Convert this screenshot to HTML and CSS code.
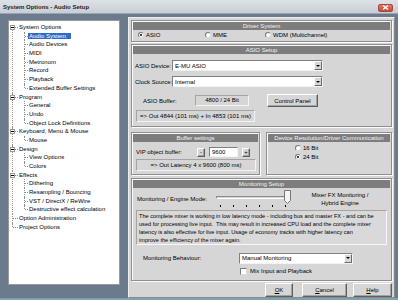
FILE: index.html
```html
<!DOCTYPE html>
<html lang="en">

<head>
    <meta charset="utf-8">
    <title>System Options - Audio Setup</title>
    <link rel="stylesheet" href="styles.css">
</head>

<body>
    <div class="window">
        <div class="titlebar">
            <span class="title">System Options - Audio Setup</span>
            <span class="close">
                <svg width="7" height="5" viewBox="0 0 7 5"><path d="M1 0.5L6 4.5M6 0.5L1 4.5" stroke="#fff" stroke-width="1.3"/></svg>
            </span>
        </div>
        <div class="main">
            <div class="tree">
                <ul>
                    <li class="node"><span class="exp"></span><div class="row">System Options</div>
                        <ul>
                            <li class="leaf"><div class="row"><span class="sel">Audio System</span></div></li>
                            <li class="leaf"><div class="row">Audio Devices</div></li>
                            <li class="leaf"><div class="row">MIDI</div></li>
                            <li class="leaf"><div class="row">Metronom</div></li>
                            <li class="leaf"><div class="row">Record</div></li>
                            <li class="leaf"><div class="row">Playback</div></li>
                            <li class="leaf"><div class="row">Extended Buffer Settings</div></li>
                        </ul>
                    </li>
                    <li class="node"><span class="exp"></span><div class="row">Program</div>
                        <ul>
                            <li class="leaf"><div class="row">General</div></li>
                            <li class="leaf"><div class="row">Undo</div></li>
                            <li class="leaf"><div class="row">Object Lock Definitions</div></li>
                        </ul>
                    </li>
                    <li class="node"><span class="exp"></span><div class="row">Keyboard, Menu &amp; Mouse</div>
                        <ul>
                            <li class="leaf"><div class="row">Mouse</div></li>
                        </ul>
                    </li>
                    <li class="node"><span class="exp"></span><div class="row">Design</div>
                        <ul>
                            <li class="leaf"><div class="row">View Options</div></li>
                            <li class="leaf"><div class="row">Colors</div></li>
                        </ul>
                    </li>
                    <li class="node"><span class="exp"></span><div class="row">Effects</div>
                        <ul>
                            <li class="leaf"><div class="row">Dithering</div></li>
                            <li class="leaf"><div class="row">Resampling / Bouncing</div></li>
                            <li class="leaf"><div class="row">VST / DirectX / ReWire</div></li>
                            <li class="leaf"><div class="row">Destructive effect calculation</div></li>
                        </ul>
                    </li>
                    <li class="node"><div class="row">Option Administration</div></li>
                    <li class="node"><div class="row">Project Options</div></li>
                </ul>
            </div>

            <div class="panel">
                <div class="group driver">
                    <div class="group-head">Driver System</div>
                    <div class="radios">
                        <label class="radio w-asio"><span class="dot on"></span>ASIO</label>
                        <label class="radio w-mme"><span class="dot"></span>MME</label>
                        <label class="radio"><span class="dot"></span>WDM (Multichannel)</label>
                    </div>
                </div>

                <div class="group asio">
                    <div class="group-head">ASIO Setup</div>
                    <div class="field first">
                        <span class="field-label">ASIO Device:</span>
                        <div class="select device-select"><span>E-MU ASIO</span><i class="arrow"></i></div>
                    </div>
                    <div class="field">
                        <span class="field-label">Clock Source:</span>
                        <div class="select device-select"><span>Internal</span><i class="arrow"></i></div>
                    </div>
                    <div class="buffer-row">
                        <span class="buffer-label">ASIO Buffer:</span>
                        <span class="readout">4800 / 24 Bit</span>
                        <button class="btn cp">Control Panel</button>
                    </div>
                    <div class="info out">=&gt; Out 4844 (101 ms) + In 4853 (101 ms)</div>
                </div>

                <div class="split">
                    <div class="group buffers">
                        <div class="group-head">Buffer settings</div>
                        <div class="spin-row">
                            <span class="spin-label">VIP object buffer:</span>
                            <button class="btn tiny">-</button>
                            <span class="num">9600</span>
                            <button class="btn tiny">+</button>
                        </div>
                        <div class="info latency">=&gt; Out Latency 4 x 9600 (800 ms)</div>
                    </div>
                    <div class="group device">
                        <div class="group-head">Device Resolution/Driver Communication</div>
                        <div class="bits">
                            <label class="radio"><span class="dot"></span>16 Bit</label>
                            <label class="radio"><span class="dot on"></span>24 Bit</label>
                        </div>
                    </div>
                </div>

                <div class="group monitoring">
                    <div class="group-head">Monitoring Setup</div>
                    <div class="engine-row">
                        <span class="engine-label">Monitoring / Engine Mode:</span>
                        <div class="slider">
                            <div class="track"></div>
                            <svg class="thumb" width="7" height="14" viewBox="0 0 7 14"><path d="M0.5 0.5H6.5V10.5L3.5 13.5L0.5 10.5Z" fill="#f4f4f4" stroke="#777"/></svg>
                            <div class="ticks"><i></i><i></i><i></i><i></i><i></i><i></i></div>
                        </div>
                        <span class="engine-value">Mixer FX Monitoring /<br>Hybrid Engine</span>
                    </div>
                    <div class="desc">
                        The complete mixer is working in low latency mode - including bus and master FX - and can be<br>
                        used for processing live input.&nbsp; This may result in increased CPU load and the complete mixer<br>
                        latency is also effective for live input. Usage of economy tracks with higher latency can<br>
                        improve the efficiency of the mixer again.
                    </div>
                    <div class="behaviour-row">
                        <span class="behaviour-label">Monitoring Behaviour:</span>
                        <div class="select behaviour"><span>Manual Monitoring</span><i class="arrow"></i></div>
                    </div>
                    <label class="check-row"><span class="box"></span>Mix Input and Playback</label>
                </div>

                <div class="actions">
                    <button class="btn ok"><u>O</u>K</button>
                    <button class="btn cancel"><u>C</u>ancel</button>
                    <button class="btn help"><u>H</u>elp</button>
                </div>
            </div>
        </div>
    </div>
</body>

</html>
```

FILE: styles.css
```css
* {
    box-sizing: border-box;
}

body {
    margin: 0;
    background-color: #6b7a8d;
    font-family: "Liberation Sans", Arial, sans-serif;
    font-size: 6px;
    color: #000;
}

.window {
    width: 398px;
    height: 300px;
    display: flex;
    flex-direction: column;
    background-color: #6b7a8d;
    border-bottom: 2px solid #7ea3b0;
    overflow: hidden;
}

.titlebar {
    height: 14px;
    flex: none;
    display: flex;
    align-items: center;
    justify-content: space-between;
    padding: 1px 5px 0 3px;
    background: linear-gradient(#dde2e7, #c7ced6);
    border-bottom: 1px solid #9aa5b2;
}

.title {
    font-weight: bold;
    color: #1c1c1c;
}

.close {
    width: 15px;
    height: 8px;
    display: flex;
    align-items: center;
    justify-content: center;
    background: linear-gradient(#e07a68, #c44a3a);
    border: 1px solid #a8483c;
    border-radius: 2px;
    margin-top: 1px;
}

.main {
    flex: 1;
    display: flex;
    align-items: flex-start;
    padding-left: 8px;
    gap: 8px;
}

/* tree view */
.tree {
    width: 112px;
    height: 265px;
    margin-top: 6px;
    padding-top: 2px;
    background: #fff;
    border: 1px solid #9a9a9a;
    overflow: hidden;
}

.tree ul {
    list-style: none;
    margin: 0;
    padding: 0;
}

.tree li {
    position: relative;
}

.row {
    height: 8.7px;
    line-height: 8.7px;
    white-space: nowrap;
}

.node {
    padding-left: 10px;
}

.node::before {
    content: "";
    position: absolute;
    left: 3px;
    top: 0;
    bottom: 0;
    border-left: 1px dotted #8c8c8c;
}

.node:first-child::before {
    top: 4px;
}

.node:last-child::before {
    bottom: auto;
    height: 4px;
}

.node::after {
    content: "";
    position: absolute;
    left: 4px;
    top: 4px;
    width: 5px;
    border-top: 1px dotted #8c8c8c;
}

.exp {
    position: absolute;
    left: 1px;
    top: 2px;
    width: 5px;
    height: 5px;
    border: 1px solid #9a9a9a;
    background: linear-gradient(#fff 1px, #000 1px, #000 2px, #fff 2px);
    background-size: 3px 3px;
    background-position: 0 0;
    background-repeat: no-repeat;
    z-index: 1;
}

.leaf {
    padding-left: 10px;
}

.leaf::before {
    content: "";
    position: absolute;
    left: 5px;
    top: 0;
    bottom: 0;
    border-left: 1px dotted #8c8c8c;
}

.leaf:last-child::before {
    bottom: auto;
    height: 4px;
}

.leaf::after {
    content: "";
    position: absolute;
    left: 6px;
    top: 4px;
    width: 3px;
    border-top: 1px dotted #8c8c8c;
}

.sel {
    background: #316ac5;
    color: #fff;
    padding: 0 5px 0 1px;
    margin-left: -1px;
}

/* right panel */
.panel {
    width: 267px;
    height: 281px;
    margin-top: 3px;
    padding: 2px 2px 0 2px;
    background: #d6d6d6;
    border: 1px solid;
    border-color: #eeeeee #8a8a8a #8a8a8a #eeeeee;
    display: flex;
    flex-direction: column;
}

.group {
    border: 1px solid #8e8e8e;
    box-shadow: inset 1px 1px 0 #fbfbfb, 1px 1px 0 #fbfbfb;
    padding: 1px;
}

.group-head {
    height: 8px;
    line-height: 8px;
    background: #7d7d7d;
    color: #f2f2f2;
    text-align: center;
    white-space: nowrap;
}

.driver {
    height: 22px;
}

.radios {
    display: flex;
    align-items: center;
    height: 10px;
    padding-left: 5px;
}

.radio {
    display: flex;
    align-items: center;
    gap: 2px;
    white-space: nowrap;
}

.w-asio {
    width: 67px;
}

.w-mme {
    width: 60px;
}

.dot {
    width: 6px;
    height: 6px;
    border-radius: 50%;
    background: #fff;
    border: 1px solid;
    border-color: #7a7a7a #dcdcdc #dcdcdc #7a7a7a;
    display: flex;
    align-items: center;
    justify-content: center;
}

.dot.on::after {
    content: "";
    width: 2px;
    height: 2px;
    border-radius: 50%;
    background: #000;
}

.asio {
    height: 83px;
    margin-top: 2px;
}

.field {
    display: flex;
    align-items: center;
    height: 11px;
    margin-top: 5px;
    padding-left: 2px;
}

.field.first {
    margin-top: 6px;
}

.field-label {
    width: 37px;
    white-space: nowrap;
}

.select {
    height: 11px;
    display: flex;
    align-items: center;
    justify-content: space-between;
    background: #fff;
    border: 1px solid;
    border-color: #808080 #f4f4f4 #f4f4f4 #808080;
    padding-left: 2px;
    white-space: nowrap;
}

.device-select {
    width: 151px;
}

.arrow {
    width: 8px;
    height: 9px;
    background: #d6d6d6;
    border: 1px solid;
    border-color: #fff #6a6a6a #6a6a6a #fff;
    display: flex;
    align-items: center;
    justify-content: center;
}

.arrow::after {
    content: "";
    border-left: 2px solid transparent;
    border-right: 2px solid transparent;
    border-top: 2px solid #000;
}

.buffer-row {
    display: flex;
    align-items: center;
    height: 13px;
    margin-top: 7px;
    padding-left: 10px;
}

.buffer-label {
    width: 52px;
}

.readout {
    width: 54px;
    height: 11px;
    line-height: 9px;
    text-align: center;
    border: 1px solid;
    border-color: #a4a4a4 #f4f4f4 #f4f4f4 #a4a4a4;
}

.btn {
    font: inherit;
    color: #000;
    background: #d6d6d6;
    border: 1px solid;
    border-color: #fff #5e5e5e #5e5e5e #fff;
    box-shadow: inset -1px -1px 0 #a2a2a2;
    padding: 0;
    margin: 0;
    height: 14px;
}

.cp {
    width: 51px;
    height: 13px;
    margin-left: 18px;
}

.info {
    height: 12px;
    line-height: 10px;
    text-align: center;
    white-space: nowrap;
    border: 1px solid;
    border-color: #a4a4a4 #f4f4f4 #f4f4f4 #a4a4a4;
}

.out {
    width: 119px;
    margin: 3px 0 0 3px;
}

.split {
    display: flex;
    gap: 6px;
    height: 43px;
    margin-top: 5px;
}

.buffers {
    width: 129px;
}

.device {
    flex: 1;
}

.spin-row {
    display: flex;
    align-items: center;
    height: 10px;
    margin-top: 5px;
    padding-left: 3px;
}

.spin-label {
    width: 61px;
    white-space: nowrap;
}

.tiny {
    width: 8px;
    height: 9px;
    line-height: 6px;
}

.num {
    width: 29px;
    height: 10px;
    line-height: 8px;
    margin: 0 4px;
    padding-left: 2px;
    background: #fff;
    border: 1px solid;
    border-color: #808080 #f4f4f4 #f4f4f4 #808080;
}

.latency {
    margin: 2px 2px 0 3px;
}

.bits {
    display: flex;
    flex-direction: column;
    gap: 3px;
    padding: 3px 0 0 27px;
}

.monitoring {
    height: 103px;
    margin-top: 3px;
}

.engine-row {
    display: flex;
    align-items: center;
    height: 20px;
    margin-top: 1px;
    padding-left: 4px;
}

.engine-label {
    width: 79px;
    white-space: nowrap;
}

.slider {
    position: relative;
    width: 74px;
    height: 20px;
}

.track {
    margin: 7px 0 0 0;
    height: 3px;
    border: 1px solid;
    border-color: #8a8a8a #fff #fff #8a8a8a;
}

.thumb {
    position: absolute;
    left: 68px;
    top: 1px;
}

.ticks {
    display: flex;
    justify-content: space-between;
    padding: 0 4px 0 4px;
    margin-top: 6px;
}

.ticks i {
    width: 1px;
    height: 2px;
    background: #000;
}

.engine-value {
    flex: 1;
    text-align: center;
    line-height: 8px;
    white-space: nowrap;
}

.desc {
    height: 35px;
    margin: 1px 3px 0 3px;
    padding: 1px 0 0 2px;
    font-size: 5.6px;
    line-height: 8px;
    white-space: nowrap;
    overflow: hidden;
    background: #d9d9d9;
    border: 1px solid;
    border-color: #a4a4a4 #f8f8f8 #f8f8f8 #a4a4a4;
}

.behaviour-row {
    display: flex;
    align-items: center;
    height: 12px;
    margin-top: 7px;
    padding-left: 10px;
}

.behaviour-label {
    width: 96px;
    white-space: nowrap;
}

.behaviour {
    width: 114px;
}

.check-row {
    display: flex;
    align-items: center;
    gap: 3px;
    height: 10px;
    margin-top: 2px;
    padding-left: 107px;
}

.box {
    width: 7px;
    height: 7px;
    background: #fff;
    border: 1px solid;
    border-color: #7a7a7a #dcdcdc #dcdcdc #7a7a7a;
}

.actions {
    display: flex;
    justify-content: flex-end;
    margin-top: 2px;
}

.ok {
    width: 28px;
}

.cancel {
    width: 45px;
    margin-left: 9px;
}

.help {
    width: 39px;
    margin-left: 6px;
}
```
